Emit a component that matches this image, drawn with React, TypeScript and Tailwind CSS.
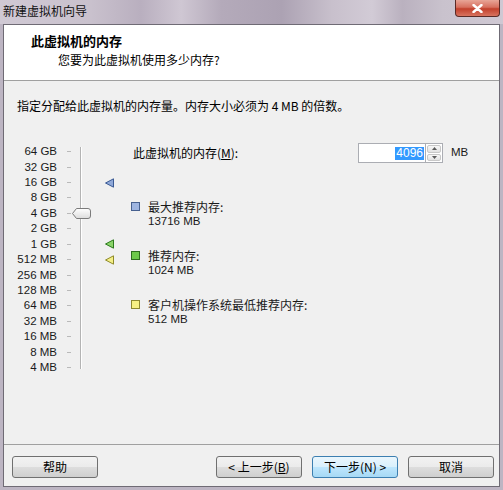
const CJK = "font-['Noto_Sans_CJK_SC','Noto_Sans',sans-serif]"
const LAT = "font-['Liberation_Sans','Noto_Sans_CJK_SC',sans-serif]"

const scale = ['64 GB', '32 GB', '16 GB', '8 GB', '4 GB', '2 GB', '1 GB', '512 MB', '256 MB', '128 MB', '64 MB', '32 MB', '16 MB', '8 MB', '4 MB']

const ROW = 15.43

function Marker({ index, fill, stroke }: { index: number; fill: string; stroke: string }) {
  // little triangle pointing at a slider step
  return (
    <svg
      className="absolute left-[101px]"
      style={{ top: index * ROW + ROW / 2 - 5 }}
      width="9"
      height="10"
      viewBox="0 0 9 10"
    >
      <path d="M0.5 5 L8.5 0.8 L8.5 9.2 Z" fill={fill} stroke={stroke} strokeWidth="1" />
    </svg>
  )
}

function Legend({ color, border, title, value }: { color: string; border: string; title: string; value: string }) {
  return (
    <div className="flex">
      <div className="w-[17px] pt-[3px]">
        <div className={`w-[9px] h-[9px] border ${border} ${color}`} />
      </div>
      <div>
        <div className={`${CJK} text-[12px] leading-[15px] text-[#1a1a1a]`}>{title}</div>
        <div className={`${LAT} text-[11.5px] leading-[15px] text-[#1a1a1a]`}>{value}</div>
      </div>
    </div>
  )
}

function Button({ children, focus }: { children: React.ReactNode; focus?: boolean }) {
  return (
    <div
      className={`w-[86px] h-[22px] rounded-[3px] border flex items-center justify-center ${CJK} text-[12px] text-black ${
        focus
          ? 'border-[#3c7fb1] bg-[linear-gradient(#eaf6fd,#d9f0fc_50%,#bee6fd_51%,#a7d9f5)]'
          : 'border-[#707070] bg-[linear-gradient(#f2f2f2,#ebebeb_50%,#dddddd_51%,#cfcfcf)]'
      }`}
    >
      {children}
    </div>
  )
}

export default function App() {
  return (
    <div className="w-[503px] h-[490px] bg-[#bdb5c3] flex flex-col overflow-hidden">
      {/* title bar */}
      <div className="relative h-[24px] shrink-0 bg-[linear-gradient(90deg,#d0c9d4_0%,#c9c1cd_18%,#b9afbf_28%,#cfc7d3_36%,#b4aaba_44%,#aca2b3_56%,#c8c0cc_66%,#d2cbd6_74%,#bab1bf_80%,#c9c2cd_88%,#cfc8d3_100%)]">
        <span className={`${CJK} absolute left-[3px] top-[3px] text-[12px] leading-[16px] text-[#111]`}>新建虚拟机向导</span>
        <div className="absolute right-[3px] top-0 w-[45px] h-[17px] rounded-b-[4px] border border-t-0 border-[#5a2a26] bg-[linear-gradient(#e8a597,#d7705f_45%,#c2402c_55%,#d8735f)] flex items-center justify-center">
          <svg width="11" height="9" viewBox="0 0 11 9">
            <path d="M1.5 1 L9.5 8 M9.5 1 L1.5 8" stroke="#fff" strokeWidth="2.4" strokeLinecap="round" />
          </svg>
        </div>
      </div>

      {/* client area */}
      <div className="ml-[3px] mr-[3px] mb-[3px] flex-1 flex flex-col border border-[#6f6b75] bg-[#f0f0f0]">
        {/* header */}
        <div className="h-[56px] shrink-0 bg-white border-b border-[#a0a0a0] pl-[27px] pt-[8px]">
          <div className={`${CJK} text-[13px] leading-[16px] font-bold text-black`}>此虚拟机的内存</div>
          <div className={`${CJK} text-[12px] leading-[16px] mt-[3px] ml-[27px] text-black`}>您要为此虚拟机使用多少内存?</div>
        </div>

        {/* body */}
        <div className="flex-1 pl-[13px] pt-[17px]">
          <div className={`${CJK} text-[12px] leading-[16px] text-black`}>
            指定分配给此虚拟机的内存量。内存大小必须为 4 MB 的倍数。
          </div>

          <div className="flex mt-[28px]">
            {/* slider */}
            <div className="relative w-[127px] -ml-[13px] mt-[2px] flex self-start">
              <div className="flex flex-col">
                {scale.map((s) => (
                  <div key={s} className="flex items-center" style={{ height: ROW }}>
                    <span className={`${LAT} w-[53px] text-right text-[11.5px] leading-[13px] text-[#1a1a1a]`}>{s}</span>
                    <span className="ml-[10px] w-[4px] h-px bg-[#b9b9b9]" />
                  </div>
                ))}
              </div>
              <div className="ml-[9px] mt-[3px] mb-[6px] w-[2px] border-l border-[#b4b4b4] border-r border-r-white" />

              {/* thumb on 4 GB */}
              <svg className="absolute left-[68px]" style={{ top: 4 * ROW + ROW / 2 - 5 }} width="19" height="11" viewBox="0 0 19 11">
                <defs>
                  <linearGradient id="thumb" x1="0" y1="0" x2="0" y2="1">
                    <stop offset="0" stopColor="#ffffff" />
                    <stop offset="1" stopColor="#dcdcdc" />
                  </linearGradient>
                </defs>
                <path d="M0.5 5.5 L4.5 0.5 L16 0.5 Q18.5 0.5 18.5 3 L18.5 8 Q18.5 10.5 16 10.5 L4.5 10.5 Z" fill="url(#thumb)" stroke="#7b7b7b" />
              </svg>

              <Marker index={2} fill="#8fa8d8" stroke="#3b5a94" />
              <Marker index={6} fill="#8bd46a" stroke="#2c7a1d" />
              <Marker index={7} fill="#f4ef86" stroke="#8f8a2a" />
            </div>

            {/* right column */}
            <div className="flex flex-col">
              <div className="flex items-center h-[20px] mt-[1px]">
                <span className={`${CJK} w-[227px] pl-[2px] text-[12px] leading-[16px] text-black`}>
                  此虚拟机的内存(<span className="underline">M</span>):
                </span>
                <div className="w-[68px] h-[20px] border border-[#abadb3] bg-white flex items-center justify-end pr-[1px]">
                  <span className={`${LAT} bg-[#3399ff] text-white text-[12px] leading-[13px] px-[1px]`}>4096</span>
                </div>
                <div className="w-[17px] h-[20px] flex flex-col border border-[#abadb3] border-l-0 bg-white p-[1px] gap-px">
                  <div className="flex-1 rounded-[2px] border border-[#c8c8c8] bg-[linear-gradient(#f7f7f7,#e2e2e2)] flex items-center justify-center">
                    <svg width="5" height="3" viewBox="0 0 5 3"><path d="M0 3 L2.5 0 L5 3 Z" fill="#5a5a5a" /></svg>
                  </div>
                  <div className="flex-1 rounded-[2px] border border-[#c8c8c8] bg-[linear-gradient(#f7f7f7,#e2e2e2)] flex items-center justify-center">
                    <svg width="5" height="3" viewBox="0 0 5 3"><path d="M0 0 L2.5 3 L5 0 Z" fill="#5a5a5a" /></svg>
                  </div>
                </div>
                <span className={`${LAT} ml-[8px] text-[11.5px] text-[#1a1a1a]`}>MB</span>
              </div>

              <div className="mt-[36px] flex flex-col gap-[19px]">
                <Legend color="bg-[#9db4e0]" border="border-[#46608f]" title="最大推荐内存:" value="13716 MB" />
                <Legend color="bg-[#6cc94a]" border="border-[#2d6d1f]" title="推荐内存:" value="1024 MB" />
                <Legend color="bg-[#f6f184]" border="border-[#8d8930]" title="客户机操作系统最低推荐内存:" value="512 MB" />
              </div>
            </div>
          </div>
        </div>

        {/* footer */}
        <div className="h-[42px] shrink-0 border-t border-[#a0a0a0] flex items-start pt-[11px] pl-[8px] pr-[5px]">
          <Button>帮助</Button>
          <div className="flex-1" />
          <div className="flex gap-[10px]">
            <Button>&lt; 上一步(<span className="underline">B</span>)</Button>
            <Button focus>下一步(N) &gt;</Button>
            <Button>取消</Button>
          </div>
        </div>
      </div>
    </div>
  )
}
